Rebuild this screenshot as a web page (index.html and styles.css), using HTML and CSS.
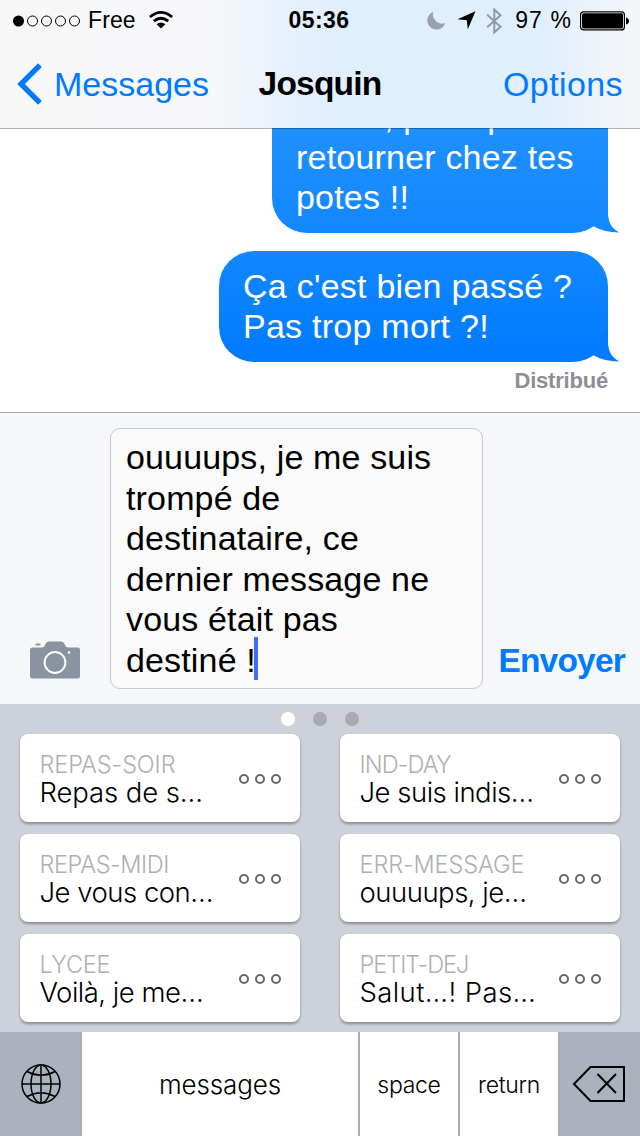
FILE: index.html
```html
<!DOCTYPE html>
<html lang="fr">
<head>
<meta charset="utf-8">
<title>Messages</title>
<link rel="stylesheet" href="styles.css">
</head>
<body>
<div class="phone">
  <header class="header">
    <div class="status">
      <div class="status-left">
        <svg class="signal" width="68" height="12" viewBox="0 0 68 12"><circle cx="5.5" cy="6" r="5.5"/><g fill="none" stroke="#000" stroke-width="1"><circle cx="19.5" cy="6" r="5"/><circle cx="33.5" cy="6" r="5"/><circle cx="47.5" cy="6" r="5"/><circle cx="61.5" cy="6" r="5"/></g></svg>
        <span class="carrier">Free</span>
        <svg class="wifi" width="24" height="18" viewBox="0 0 24 18"><g fill="none" stroke="#000" stroke-width="2.8"><path d="M.9 6Q12-3.200 23.100 6"/><path d="M4.800 10.200Q12 4.200 19.200 10.200"/></g><path d="M7.600 13.300Q12 9.600 16.400 13.300L12 17.500Z"/></svg>
      </div>
      <span class="clock">05:36</span>
      <div class="status-right">
        <svg width="19" height="19" viewBox="0 0 19 19"><path d="M6.500.700A9.200 9.200 0 1 0 18.300 12A9 9 0 0 1 6.500.700Z" fill="#98a3ae"/></svg>
        <svg class="arrow" width="19" height="19" viewBox="0 0 19 19"><path d="M18.500.300L10.800 18.200L9.800 9.300L.500 8.300Z"/></svg>
        <svg class="bluetooth" width="17" height="28" viewBox="0 0 17 28"><path d="M1.200 7.800L14.500 19.800L8.300 25.500V2.500L14.500 8.200L1.200 20.200" fill="none" stroke="#8f9aa6" stroke-width="2"/></svg>
        <span class="percent">97 %</span>
        <svg class="battery" width="49" height="20" viewBox="0 0 49 20"><rect x=".6" y=".9" width="43.800" height="18" rx="3" fill="#fff" stroke="#000" stroke-width="1.200"/><rect x="2" y="2.300" width="41" height="15.200" rx="1.500"/><path d="M46 6.500Q49 7.500 49 10T46 13.500Z"/></svg>
      </div>
    </div>
    <nav class="nav">
      <a class="back"><svg width="26" height="42" viewBox="0 0 26 42"><path d="M23 2.200L4 21L23 39.800" fill="none" stroke="#007aff" stroke-width="5.400"/></svg><span>Messages</span></a>
      <h1 class="title">Josquin</h1>
      <a class="options">Options</a>
    </nav>
  </header>

  <main class="chat">
    <div class="bubble bubble-first">Sinon, plus qu'à<br>retourner chez tes<br>potes !!<svg class="tail" width="27" height="36" viewBox="0 0 27 36"><path d="M0 29Q11 35.500 26.500 35.500Q15 30 15 16V1L10 14Z"/></svg></div>
    <div class="bubble bubble-second">Ça c'est bien passé ?<br>Pas trop mort ?!<svg class="tail" width="27" height="36" viewBox="0 0 27 36"><path d="M0 29Q11 35.500 26.500 35.500Q15 30 15 16V1L10 14Z"/></svg></div>
    <div class="receipt">Distribué</div>
  </main>

  <section class="compose">
    <svg class="camera" width="50" height="38" viewBox="0 0 50 38"><path d="M5.500 4.500V3.500Q5.500 2.500 6.500 2.500H9.500Q10.500 2.500 10.500 3.500V4.500ZM2.500 6.500H12Q14 6.500 15 4L16 2Q17 .5 19 .5H31Q33 .5 34 2L35 4Q36 6.500 38 6.500H47.500Q50 6.500 50 9V35Q50 37.500 47.500 37.500H2.500Q0 37.500 0 35V9Q0 6.500 2.500 6.500Z" fill="#8a939f"/><circle cx="25" cy="21.500" r="10.400" fill="none" stroke="#fff" stroke-width="2"/><circle cx="39" cy="11.500" r="1.200" fill="#fff"/></svg>
    <div class="field">ouuuups, je me suis<br>trompé de<br>destinataire, ce<br>dernier message ne<br>vous était pas<br>destiné !<span class="caret"></span></div>
    <button class="send">Envoyer</button>
  </section>

  <section class="snippets">
    <div class="dots"><i class="dot active"></i><i class="dot"></i><i class="dot"></i></div>
    <div class="grid">
      <article class="card dinner"><div class="copy"><h2>REPAS-SOIR</h2><p>Repas de s…</p></div><div class="more"><i></i><i></i><i></i></div></article>
      <article class="card busy"><div class="copy"><h2>IND-DAY</h2><p>Je suis indis…</p></div><div class="more"><i></i><i></i><i></i></div></article>
      <article class="card lunch"><div class="copy"><h2>REPAS-MIDI</h2><p>Je vous con…</p></div><div class="more"><i></i><i></i><i></i></div></article>
      <article class="card error"><div class="copy"><h2>ERR-MESSAGE</h2><p>ouuuups, je…</p></div><div class="more"><i></i><i></i><i></i></div></article>
      <article class="card school"><div class="copy"><h2>LYCEE</h2><p>Voilà, je me…</p></div><div class="more"><i></i><i></i><i></i></div></article>
      <article class="card breakfast"><div class="copy"><h2>PETIT-DEJ</h2><p>Salut…! Pas…</p></div><div class="more"><i></i><i></i><i></i></div></article>
    </div>
  </section>

  <footer class="keys">
    <div class="key dark globe"><svg width="40" height="40" viewBox="0 0 40 40"><g fill="none" stroke="#000" stroke-width="1.500"><circle cx="20" cy="20" r="19"/><path d="M20 1V39M1 20H39M6 7.500Q20 15 34 7.500M6 32.500Q20 25 34 32.500"/><ellipse cx="20" cy="20" rx="10" ry="19"/></g></svg></div>
    <div class="key wide">messages</div>
    <div class="key small">space</div>
    <div class="key small">return</div>
    <div class="key dark erase"><svg width="54" height="38" viewBox="0 0 54 38"><path d="M2 19L18.500 2H52V36H18.500ZM25.500 9L44 28M44 9L25.500 28" fill="none" stroke="#000" stroke-width="2"/></svg></div>
  </footer>
</div>
</body>
</html>
```
FILE: styles.css
```css
* { box-sizing: border-box; }
body { margin: 0; font-family: "Liberation Sans", Arial, sans-serif; color: #000; }
h1, h2, p { margin: 0; font-weight: inherit; }
svg { display: block; flex: none; }

.phone { width: 640px; height: 1136px; display: flex; flex-direction: column; overflow: hidden; background: #fff; }

.header { height: 128px; background: linear-gradient(90deg, #f7f7f8 0, #f6f7f9 34%, #e5f1fd 46%, #dfeffe 55%, #dfeffe 84%, #edf3fb 93%, #f4f6f9 100%); }
.status { height: 40px; display: grid; grid-template-columns: 1fr auto 1fr; align-items: center; padding: 1px 11px 0 13px; font-size: 23px; }
.status-left { display: flex; align-items: center; }
.carrier { margin-left: 7px; letter-spacing: .1px; }
.wifi { margin-left: 13px; margin-top: -2px; }
.clock { margin-right: 4px; font-weight: bold; letter-spacing: .4px; }
.status-right { display: flex; align-items: center; justify-content: flex-end; }
.arrow { margin-left: 11px; }
.bluetooth { margin-left: 10px; }
.percent { margin-left: 12px; letter-spacing: 1.100px; white-space: nowrap; }
.battery { margin-left: 8px; }

.nav { height: 88px; display: grid; grid-template-columns: 1fr auto 1fr; align-items: center; padding: 0 17px; font-size: 34px; color: #007aff; }
.back { display: flex; align-items: center; gap: 11px; }
.title { color: #000; font-weight: bold; font-size: 33.500px; letter-spacing: -.8px; }
.options { justify-self: end; letter-spacing: .4px; }

.chat { position: relative; height: 284px; overflow: hidden; display: flex; flex-direction: column; align-items: flex-end; padding-right: 32px; background: #fff; }
.chat::before { content: ""; position: absolute; z-index: 1; inset: 0 0 auto; height: 1px; background: rgba(0, 0, 0, .3); }
.bubble { position: relative; flex: none; padding: 15px 20px 14px 24px; border-radius: 35px; color: #fff; font-size: 34px; line-height: 40.200px; letter-spacing: .25px; white-space: nowrap; }
.bubble-first { width: 336px; height: 152px; margin-top: -47px; line-height: 40.600px; letter-spacing: .2px; background: linear-gradient(#2593ff, #1288ff); }
.bubble-second { width: 389px; height: 110.500px; margin-top: 18px; background: linear-gradient(#1188ff, #007aff); }
.tail { position: absolute; right: -12px; bottom: 0; fill: #1389ff; }
.bubble-second .tail { fill: #017bff; }
.receipt { margin-top: 6px; font-size: 22px; line-height: 25px; font-weight: bold; color: #8e8e93; letter-spacing: -.2px; }

.compose { height: 292px; border-top: 1px solid #a9aaae; background: #f6f7f8; display: flex; align-items: flex-end; padding: 0 15px 15px 30px; }
.camera { margin-bottom: 10.500px; }
.field { width: 373px; height: 261px; margin-left: 30px; padding: 8px 0 0 15px; border: 1px solid #c8c8cd; border-radius: 10px; background: #fafafa; font-size: 34px; line-height: 40.500px; letter-spacing: .15px; white-space: nowrap; }
.caret { display: inline-block; width: 4px; height: 43px; margin: -3px 0 0 -1.500px; vertical-align: top; background: #426bf2; }
.send { margin: 0 0 8px auto; padding: 0; border: 0; background: none; font: bold 33.500px/40px "Liberation Sans", Arial, sans-serif; color: #007aff; letter-spacing: -.8px; }

.snippets { height: 328px; background: #cdd1d9; }
.dots { height: 30px; display: flex; justify-content: center; align-items: center; gap: 18px; }
.dot { width: 14px; height: 14px; border-radius: 50%; background: #aaa; }
.dot.active { background: #fff; }
.grid { display: grid; grid-template-columns: 280px 280px; gap: 12px 40px; padding: 0 20px; }
.card { height: 88px; display: flex; justify-content: space-between; padding: 16px 19px 0 19.500px; border-radius: 8px; background: #fff; box-shadow: 0 2px 3px rgba(0, 0, 0, .35); font-family: Inter, "Liberation Sans", sans-serif; }
.copy { white-space: nowrap; }
.copy h2 { padding-top: 1px; font-size: 23.500px; line-height: 28px; font-weight: 300; color: #b0b0b0; letter-spacing: -.9px; }
.copy p { font-size: 27.500px; line-height: 27px; font-weight: 300; letter-spacing: -.5px; }
.dinner h2 { letter-spacing: -.1px; }
.dinner p { letter-spacing: -.1px; }
.lunch h2 { letter-spacing: -.4px; }
.error h2 { letter-spacing: -.1px; }
.school h2 { letter-spacing: -.3px; }
.breakfast h2 { letter-spacing: -1px; }
.breakfast p { letter-spacing: .4px; }
.more { display: flex; gap: 6px; padding-top: 24px; }
.more i { width: 10px; height: 10px; border: 2px solid #666; border-radius: 50%; }

.keys { height: 104px; display: grid; grid-template-columns: 80px 278px 100px 100px 82px; }
.key { display: flex; align-items: center; justify-content: center; background: #fff; border-left: 2px solid #a9abb1; font-family: Inter, "Liberation Sans", sans-serif; font-weight: 300; font-size: 26px; letter-spacing: -.1px; }
.key.dark { background: #abb2be; border-left: 0; }
.key.small { font-size: 23px; letter-spacing: -.3px; padding-top: 1px; }
.key.globe { padding-left: 1px; }
.key.erase { border-left: 2px solid #a9abb1; padding-right: 2px; }
```
